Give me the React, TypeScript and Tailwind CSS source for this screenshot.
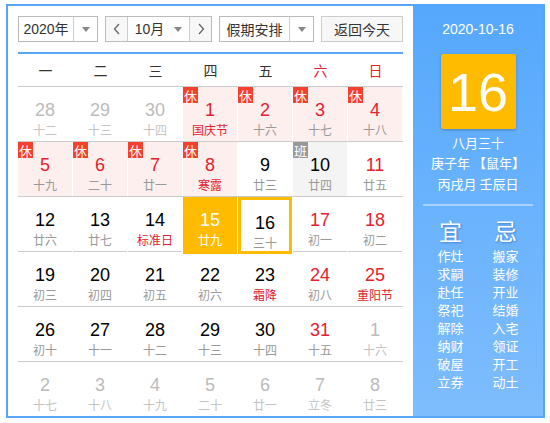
import React from 'react';

type Day = {
  d: number;
  lunar: string;
  other?: boolean;
  red?: boolean;
  festival?: boolean;
  badge?: '休' | '班';
  today?: boolean;
  selected?: boolean;
};

const rows: Day[][] = [
  [
    { d: 28, lunar: '十二', other: true },
    { d: 29, lunar: '十三', other: true },
    { d: 30, lunar: '十四', other: true },
    { d: 1, lunar: '国庆节', red: true, festival: true, badge: '休' },
    { d: 2, lunar: '十六', red: true, badge: '休' },
    { d: 3, lunar: '十七', red: true, badge: '休' },
    { d: 4, lunar: '十八', red: true, badge: '休' },
  ],
  [
    { d: 5, lunar: '十九', red: true, badge: '休' },
    { d: 6, lunar: '二十', red: true, badge: '休' },
    { d: 7, lunar: '廿一', red: true, badge: '休' },
    { d: 8, lunar: '寒露', red: true, festival: true, badge: '休' },
    { d: 9, lunar: '廿三' },
    { d: 10, lunar: '廿四', badge: '班' },
    { d: 11, lunar: '廿五', red: true },
  ],
  [
    { d: 12, lunar: '廿六' },
    { d: 13, lunar: '廿七' },
    { d: 14, lunar: '标准日', festival: true },
    { d: 15, lunar: '廿九', today: true },
    { d: 16, lunar: '三十', selected: true },
    { d: 17, lunar: '初一', red: true },
    { d: 18, lunar: '初二', red: true },
  ],
  [
    { d: 19, lunar: '初三' },
    { d: 20, lunar: '初四' },
    { d: 21, lunar: '初五' },
    { d: 22, lunar: '初六' },
    { d: 23, lunar: '霜降', festival: true },
    { d: 24, lunar: '初八', red: true },
    { d: 25, lunar: '重阳节', red: true, festival: true },
  ],
  [
    { d: 26, lunar: '初十' },
    { d: 27, lunar: '十一' },
    { d: 28, lunar: '十二' },
    { d: 29, lunar: '十三' },
    { d: 30, lunar: '十四' },
    { d: 31, lunar: '十五', red: true },
    { d: 1, lunar: '十六', other: true },
  ],
  [
    { d: 2, lunar: '十七', other: true },
    { d: 3, lunar: '十八', other: true },
    { d: 4, lunar: '十九', other: true },
    { d: 5, lunar: '二十', other: true },
    { d: 6, lunar: '廿一', other: true },
    { d: 7, lunar: '立冬', other: true },
    { d: 8, lunar: '廿三', other: true },
  ],
];

const yi = ['作灶', '求嗣', '赴任', '祭祀', '解除', '纳财', '破屋', '立券'];
const ji = ['搬家', '装修', '开业', '结婚', '入宅', '领证', '开工', '动土'];

const Caret = () => (
  <span className="w-0 h-0 border-l-[4px] border-r-[4px] border-t-[5px] border-l-transparent border-r-transparent border-t-[#888]" />
);

const Cell: React.FC<{ day: Day }> = ({ day }) => {
  let bg = '';
  if (day.today) bg = 'bg-[#ffbb00]';
  else if (day.badge === '休') bg = 'bg-[#fdefee]';
  else if (day.badge === '班') bg = 'bg-[#f4f4f4]';

  let numColor = 'text-black';
  let lunarColor = 'text-[#999]';
  if (day.other) {
    numColor = 'text-[#bbb]';
    lunarColor = 'text-[#c4c4c4]';
  } else if (day.today) {
    numColor = 'text-white';
    lunarColor = 'text-white';
  } else {
    if (day.red) numColor = 'text-[#e3222e]';
    if (day.festival) lunarColor = 'text-[#e3222e]';
  }

  return (
    <div className="border-r border-white h-full">
      <div
        className={`relative h-full flex flex-col items-center pt-[11px] ${bg} ${
          day.selected ? 'border-[3px] border-[#ffbb00] pt-[8px]' : ''
        }`}
      >
        {day.badge && (
          <span
            className={`absolute top-0 left-0 w-[15px] h-[16px] flex items-center justify-center text-[13px] leading-none text-white ${
              day.badge === '休' ? 'bg-[#f5402e]' : 'bg-[#999]'
            }`}
          >
            {day.badge}
          </span>
        )}
        <span className={`text-[18px] leading-[24px] font-['Liberation_Sans',sans-serif] ${numColor}`}>
          {day.d}
        </span>
        <span className={`text-[12px] leading-[16px] ${lunarColor}`}>{day.lunar}</span>
      </div>
    </div>
  );
};

export default function App() {
  const weekdays = ['一', '二', '三', '四', '五', '六', '日'];
  return (
    <div className="w-[550px] h-[423px] bg-white pt-[4px] pl-[6px] font-['Noto_Sans_CJK_SC',sans-serif]">
      <div className="w-[539px] h-[414px] border-2 border-[#55a6f6] flex overflow-hidden">
        {/* Calendar */}
        <div className="w-[405px] px-[10px] pt-[10px]">
          <div className="flex h-[26px] text-[14px] text-[#333]">
            <div className="w-[80px] flex border border-[#bbb]">
              <div className="flex-1 flex items-center justify-center font-['Liberation_Sans','Noto_Sans_CJK_SC',sans-serif]">2020年</div>
              <div className="w-[24px] flex items-center justify-center border-l border-[#ccc]">
                <Caret />
              </div>
            </div>
            <div className="ml-[7px] w-[107px] flex border border-[#bbb]">
              <div className="w-[22px] flex items-center justify-center bg-[#f7f7f7] border-r border-[#ccc] text-[#666]">
                <svg width="8" height="12" viewBox="0 0 8 12"><path d="M6 1 L1.5 6 L6 11" fill="none" stroke="#666" strokeWidth="1.3" /></svg>
              </div>
              <div className="flex-1 flex items-center justify-center gap-[10px]">
                <span className="font-['Liberation_Sans','Noto_Sans_CJK_SC',sans-serif]">10月</span>
                <Caret />
              </div>
              <div className="w-[22px] flex items-center justify-center bg-[#f7f7f7] border-l border-[#ccc]">
                <svg width="8" height="12" viewBox="0 0 8 12"><path d="M2 1 L6.5 6 L2 11" fill="none" stroke="#666" strokeWidth="1.3" /></svg>
              </div>
            </div>
            <div className="ml-[7px] w-[95px] flex border border-[#bbb]">
              <div className="flex-1 flex items-center justify-center">假期安排</div>
              <div className="w-[24px] flex items-center justify-center border-l border-[#ccc]">
                <Caret />
              </div>
            </div>
            <div className="ml-[7px] w-[82px] flex items-center justify-center border border-[#ccc] bg-[#f7f7f7]">
              返回今天
            </div>
          </div>
          <div className="mt-[10px] border-t-2 border-[#55a6f6]" />
          <div className="grid grid-cols-7 h-[32px] items-center text-[14px] text-[#333]">
            {weekdays.map((w, i) => (
              <div key={w} className={`text-center ${i >= 5 ? 'text-[#e3222e]' : ''}`}>
                {w}
              </div>
            ))}
          </div>
          {rows.map((row, ri) => (
            <div key={ri} className="grid grid-cols-7 h-[55px] border-t border-[#ccc]">
              {row.map((day, ci) => (
                <Cell key={ci} day={day} />
              ))}
            </div>
          ))}
        </div>

        {/* Side panel */}
        <div className="flex-1 bg-gradient-to-b from-[#55a8fd] to-[#7ebdfd] flex flex-col items-center text-white">
          <div className="mt-[14px] text-[14px] leading-[18px] font-['Liberation_Sans',sans-serif]">2020-10-16</div>
          <div className="mt-[16px] w-[75px] h-[75px] bg-[#ffbb00] rounded-[2px] shadow-[0_1px_3px_rgba(0,0,0,0.25)] flex items-center justify-center text-[54px] leading-none font-['Liberation_Sans',sans-serif]">
            16
          </div>
          <div className="mt-[4px] text-[13px] leading-[20px]">八月三十</div>
          <div className="text-[13px] leading-[20px]">庚子年 【鼠年】</div>
          <div className="text-[13px] leading-[20px] mt-[1px]">丙戌月 壬辰日</div>
          <div className="mt-[10px] w-[110px] h-[2px] bg-[#a8d1fd]" />
          <div className="mt-[10px] flex gap-[25px]">
            {[{ t: '宜', items: yi }, { t: '忌', items: ji }].map((col) => (
              <div key={col.t} className="flex flex-col items-center w-[30px]">
                <div className="text-[23px] leading-[28px] [text-shadow:1px_1px_2px_rgba(0,60,140,0.4)]">{col.t}</div>
                <div className="mt-[3px] flex flex-col">
                  {col.items.map((s) => (
                    <span key={s} className="text-[13px] leading-[18px]">{s}</span>
                  ))}
                </div>
              </div>
            ))}
          </div>
        </div>
      </div>
    </div>
  );
}
